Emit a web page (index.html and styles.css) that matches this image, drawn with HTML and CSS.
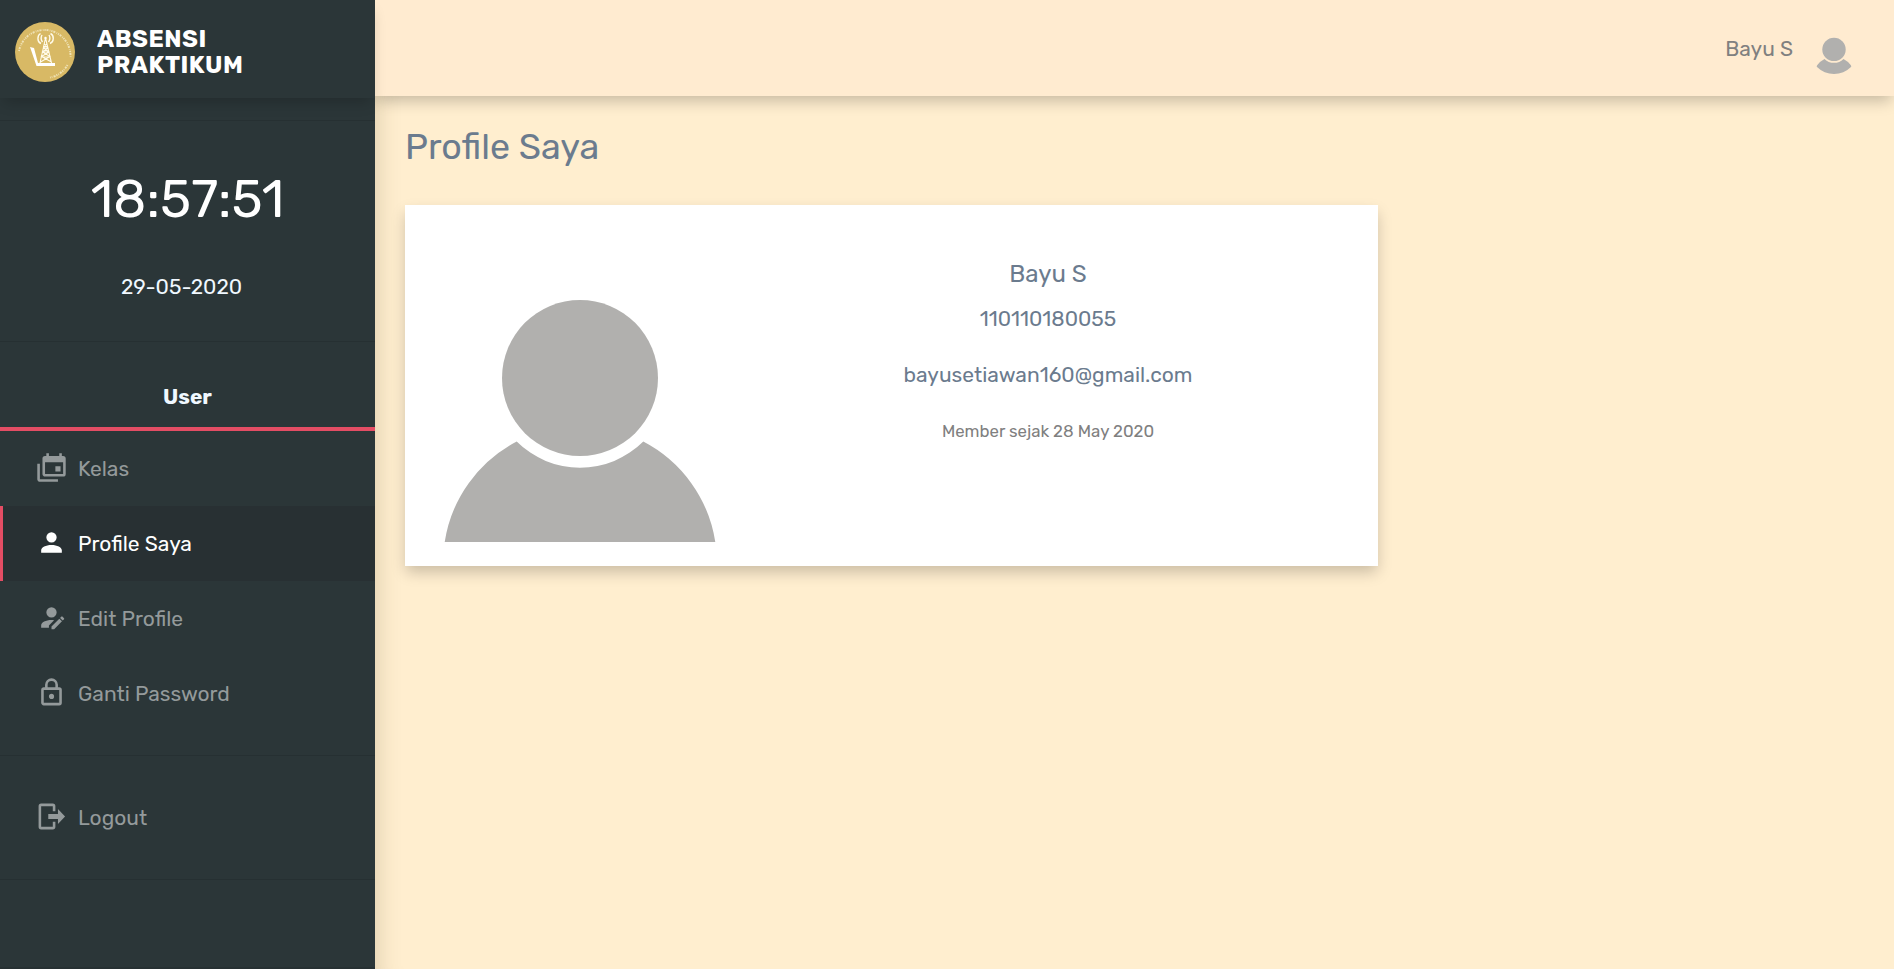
FILE: index.html
```html
<!DOCTYPE html>
<html lang="id">
<head>
<meta charset="utf-8">
<title>Profile Saya</title>
<link rel="stylesheet" href="styles.css">
</head>
<body>
<div class="app">
  <aside class="sidebar">
    <div class="brand">
      <svg class="logo" viewBox="0 0 60 60">
        <circle cx="30" cy="30" r="30" fill="#d8b965"/>
        <path d="M4 29A26 26 0 0 1 55.500 35" fill="none" stroke="#efe2b6" stroke-width="1.900" stroke-dasharray="1.200 .9 2 1.300 .7 1"/>
        <path d="M52.500 43A26 26 0 0 1 35 55.500" fill="none" stroke="#efe2b6" stroke-width="1.900" stroke-dasharray="1.200 .9 2 1.300 .7 1"/>
        <g fill="none" stroke="#fffbea" stroke-width="1.1">
          <path d="M30.500 16L25 41M30.500 16L36.500 41M29.500 22L33 26L27.500 30L35 34.500L25.500 40M31.500 22L28.500 26L34 30L26.500 34.500L36.500 40M28 26H33M27 30H34.500M26 35H35.500"/>
          <path d="M27 13Q25 16.500 27.500 20M34 13Q36 16.500 33.500 20M25.500 11.500C22 13.500 22 20 26 21.500M35.500 11.500C39.500 13.500 39 20 35 21.500" stroke-width="1.4"/>
        </g>
        <path d="M15 25L19 26L23 41L40 41V44H21.500Z" fill="#fff"/>
        <circle cx="30.500" cy="16" r="1.200" fill="#fff"/>
      </svg>
      <div class="brand-name">
        <span>ABSENSI</span>
        <span>PRAKTIKUM</span>
      </div>
    </div>
    <div class="clock-block">
      <div class="clock">18:57:51</div>
      <div class="date">29-05-2020</div>
    </div>
    <div class="role"><span>User</span></div>
    <nav class="menu">
      <a class="item"><svg class="icon" viewBox="0 0 24 24"><path d="M21,17V8H7V17H21M21,3A2,2 0 0,1 23,5V17A2,2 0 0,1 21,19H7C5.89,19 5,18.1 5,17V5A2,2 0 0,1 7,3H8V1H10V3H18V1H20V3H21M3,21H17V23H3C1.89,23 1,22.1 1,21V9H3V21M19,15H15V11H19V15Z"/></svg><span>Kelas</span></a>
      <a class="item active"><svg class="icon" viewBox="0 0 24 24"><path d="M12,4A4,4 0 0,1 16,8A4,4 0 0,1 12,12A4,4 0 0,1 8,8A4,4 0 0,1 12,4M12,14C16.42,14 20,15.79 20,18V20H4V18C4,15.79 7.58,14 12,14Z"/></svg><span>Profile Saya</span></a>
      <a class="item"><svg class="icon" viewBox="0 0 24 24"><path d="M21.7,13.35L20.7,14.35L18.65,12.3L19.65,11.3C19.86,11.09 20.21,11.09 20.42,11.3L21.7,12.58C21.91,12.79 21.91,13.14 21.7,13.35M12,18.94L18.06,12.88L20.11,14.93L14.06,21H12V18.94M12,14C7.58,14 4,15.79 4,18V20H10V18.11L14,14.11C13.34,14.03 12.67,14 12,14M12,4A4,4 0 0,0 8,8A4,4 0 0,0 12,12A4,4 0 0,0 16,8A4,4 0 0,0 12,4Z"/></svg><span>Edit Profile</span></a>
      <a class="item"><svg class="icon" viewBox="0 0 24 24"><path d="M12,17C10.89,17 10,16.1 10,15C10,13.89 10.89,13 12,13A2,2 0 0,1 14,15A2,2 0 0,1 12,17M18,20V10H6V20H18M18,8A2,2 0 0,1 20,10V20A2,2 0 0,1 18,22H6C4.89,22 4,21.1 4,20V10C4,8.89 4.89,8 6,8H7V6A5,5 0 0,1 12,1A5,5 0 0,1 17,6V8H18M12,3A3,3 0 0,0 9,6V8H15V6A3,3 0 0,0 12,3Z"/></svg><span>Ganti Password</span></a>
    </nav>
    <div class="logout">
      <a class="item"><svg class="icon" viewBox="0 0 24 24"><path d="M17,17.250V14H9.500V10H17V6.250L22.500,12L17,17.750M13,2A2,2 0 0,1 15,4V8H13V4H4V20H13V16H15V20A2,2 0 0,1 13,22H4A2,2 0 0,1 2,20V4A2,2 0 0,1 4,2H13Z"/></svg><span>Logout</span></a>
    </div>
  </aside>
  <div class="page">
    <header class="topbar">
      <span class="user-name">Bayu S</span>
      <svg class="avatar-small" viewBox="0 0 320 320">
        <circle cx="160" cy="156" r="78"/>
        <path d="M96.700 219.500A89.600 89.600 0 0 0 223.300 219.500A136.700 136.700 0 0 1 295.300 320H24.700A136.700 136.700 0 0 1 96.700 219.500Z"/>
      </svg>
    </header>
    <main class="content">
      <h1 class="title">Profile Saya</h1>
      <section class="card">
        <svg class="avatar" viewBox="0 0 320 320">
          <circle cx="160" cy="156" r="78"/>
          <path d="M96.700 219.500A89.600 89.600 0 0 0 223.300 219.500A136.700 136.700 0 0 1 295.300 320H24.700A136.700 136.700 0 0 1 96.700 219.500Z"/>
        </svg>
        <div class="details">
          <h2 class="name">Bayu S</h2>
          <p class="nim">110110180055</p>
          <p class="email">bayusetiawan160@gmail.com</p>
          <p class="member">Member sejak 28 May 2020</p>
        </div>
      </section>
    </main>
  </div>
</div>
</body>
</html>
```
FILE: styles.css
```css
* { box-sizing: border-box; }
body { margin: 0; font-family: Rubik, Roboto, sans-serif; font-size: 21px; background: #ffeecf; }
.app { display: flex; height: 969px; overflow: hidden; }

.sidebar { width: 375px; flex: none; background: #2b3638; color: #fff; position: relative; z-index: 2; }
.brand { height: 98px; padding: 7px 0 0 15px; display: flex; align-items: center; gap: 22px; box-shadow: 0 8px 14px -4px rgba(0, 0, 0, .2); }
.logo { width: 60px; height: 60px; margin-top: -1px; }
.brand-name { display: flex; flex-direction: column; margin-top: -1px; font: 700 24px/26.5px Rubik, Lato, sans-serif; letter-spacing: .5px; }

.clock-block { margin-top: 22px; height: 222px; border-top: 1px solid #263032; border-bottom: 1px solid #263032; text-align: center; }
.clock { font-size: 52.5px; line-height: 60px; margin-top: 48px; }
.date { line-height: 30px; margin-top: 43px; padding-right: 12px; color: #f0f8ff; }
.role { height: 89px; border-bottom: 4px solid #e44d64; text-align: center; font-weight: 700; line-height: 30px; padding-top: 40px; color: #f0f8ff; }

.item { display: flex; align-items: center; height: 75px; padding-left: 36px; gap: 11px; color: #949a9b; line-height: 30px; }
.item span { padding-top: 1px; }
.icon { width: 31px; height: 31px; fill: currentColor; margin-top: -2px; }
.active { background: #283033; color: #fff; border-left: 3px solid #e44d64; padding-left: 33px; }
.logout { margin-top: 24px; height: 125px; padding-top: 24px; border-top: 1px solid #263032; border-bottom: 1px solid #263032; }
.sidebar::after { content: ""; display: block; margin-top: 87px; height: 2px; background: #273133; }

.page { flex: 1; display: flex; flex-direction: column; }
.topbar { position: relative; z-index: 1; height: 96px; flex: none; background: #ffebd0; display: flex; justify-content: flex-end; padding: 26px 36px 0 0; gap: 17px; box-shadow: 0 8px 14px -3px rgba(0, 0, 0, .22); color: #808080; }
.user-name { line-height: 30px; padding-top: 8px; }
.avatar-small { width: 48px; height: 48px; border-radius: 50%; fill: #b1b0ae; }

.content { flex: 1; padding: 28px 30px 0; box-shadow: inset 26px 0 24px -24px rgba(80, 70, 30, .2); }
.title { margin: 0; font-weight: 400; font-size: 35.8px; line-height: 46px; color: #6b7b8e; }
.card { margin-top: 35px; width: 973px; height: 361px; background: #fff; display: flex; padding: 17px 0 0 15px; box-shadow: 0 7px 14px -1px rgba(0, 0, 0, .21); }
.avatar { width: 320px; height: 320px; flex: none; fill: #b1b0ae; }
.details { width: 616px; text-align: center; color: #6b7b8e; padding-top: 35px; }
.details p { margin: 0; line-height: 30px; }
.details .name { margin: 0; font-size: 24px; line-height: 34px; font-weight: 400; }
.details .nim { margin-top: 13px; }
.details .email { margin-top: 26px; }
.details .member { margin-top: 26px; font-size: 16.8px; color: #808080; }
```
